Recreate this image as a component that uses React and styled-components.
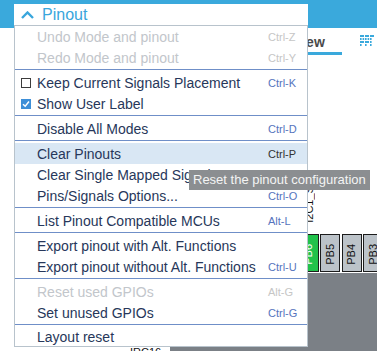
import React from 'react';
import styled, { createGlobalStyle } from 'styled-components';

const GlobalStyle = createGlobalStyle`
  html, body {
    margin: 0;
    padding: 0;
    background: #fff;
  }
  body {
    font-family: "Liberation Sans", Arial, sans-serif;
  }
`;

const Page = styled.div`
  position: relative;
  width: 377px;
  height: 351px;
  overflow: hidden;
  background: #fff;
  display: flex;
  flex-direction: column;
  font-family: "Liberation Sans", Arial, sans-serif;
`;

const TopBar = styled.div`
  height: 28px;
  flex-shrink: 0;
  background: #3aa9dc;
`;

const TabRow = styled.div`
  height: 27px;
  flex-shrink: 0;
  display: flex;
  align-items: flex-end;
  padding-left: 232px;
`;

const Tab = styled.div`
  padding: 0 17px 2px 15px;
  font-size: 14px;
  line-height: 16px;
  font-weight: bold;
  color: #4a4a4a;
  border-bottom: 3px solid #3aa9dc;
  white-space: nowrap;
`;

const ViewIcon = styled.svg`
  align-self: flex-start;
  margin-top: 7px;
  margin-left: 18px;
  flex-shrink: 0;
`;

const Canvas = styled.div`
  position: relative;
  flex: 1;
`;

const ChipBody = styled.div`
  position: absolute;
  left: 170px;
  top: 218px;
  right: -20px;
  bottom: -20px;
  background: #7b8086;
`;

const PinRow = styled.div`
  position: absolute;
  left: 277px;
  top: 179px;
  display: flex;
  gap: 1.5px;
`;

const Pin = styled.div`
  box-sizing: border-box;
  width: 20px;
  height: 38px;
  border: 1px solid #1c1c1c;
  background: ${p => (p.$active ? '#21c24b' : '#bcc3c9')};
  color: ${p => (p.$active ? '#fff' : '#111')};
  display: flex;
  flex-direction: column;
  justify-content: flex-end;
  align-items: center;
  padding-bottom: 6px;
  font-size: 11px;
`;

const Vertical = styled.span`
  writing-mode: vertical-rl;
  transform: rotate(180deg);
  line-height: 1;
  white-space: nowrap;
`;

const SignalLabel = styled(Vertical)`
  position: absolute;
  left: 304px;
  top: 117px;
  font-size: 11px;
  color: #111;
`;

const PinName = styled.span`
  position: absolute;
  left: 130px;
  top: 291px;
  font-size: 11px;
  color: #111;
  white-space: nowrap;
`;

const Menu = styled.div`
  position: absolute;
  left: 14px;
  top: 4px;
  width: 294px;
`;

const MenuHeader = styled.div`
  height: 21px;
  background: #fff;
  display: flex;
  align-items: center;
  gap: 8px;
  padding-left: 7px;
  font-size: 16px;
  color: #39a6dc;
`;

const Dropdown = styled.div`
  border: 1px solid #b8c3cc;
  background: #fff;
`;

const Row = styled.div`
  display: grid;
  grid-template-columns: 16px 1fr 39px;
  align-items: center;
  height: ${p => (p.$last ? '19px' : '21px')};
  padding-left: 6px;
  box-sizing: border-box;
  background: ${p => (p.$hover ? '#d9e7f4' : 'transparent')};
`;

const Label = styled.span`
  font-size: 14px;
  white-space: nowrap;
  color: ${p => (p.$disabled ? '#c2c6cb' : '#27375a')};
`;

const Shortcut = styled.span`
  font-size: 11px;
  white-space: nowrap;
  color: ${p => (p.$disabled ? '#c6c6c6' : p.$hover ? '#333' : '#5674bd')};
`;

const Check = styled.span`
  box-sizing: border-box;
  width: 10px;
  height: 10px;
  display: flex;
  align-items: center;
  justify-content: center;
  border: 1px solid ${p => (p.$checked ? '#3d8fd8' : '#3c3c3c')};
  background: ${p => (p.$checked ? '#3d8fd8' : '#fff')};
`;

const Separator = styled.div`
  height: 1px;
  margin: 1px 0 2px;
  background: #6f8fc8;
`;

const Tooltip = styled.div`
  position: absolute;
  left: 189px;
  top: 170px;
  height: 20px;
  padding: 0 4px;
  background: #8b8e91;
  color: #f4f4f4;
  font-size: 13px;
  line-height: 20px;
  white-space: nowrap;
`;

const groups = [
  [
    { label: 'Undo Mode and pinout', key: 'Ctrl-Z', disabled: true },
    { label: 'Redo Mode and pinout', key: 'Ctrl-Y', disabled: true },
  ],
  [
    { label: 'Keep Current Signals Placement', key: 'Ctrl-K', check: false },
    { label: 'Show User Label', check: true },
  ],
  [{ label: 'Disable All Modes', key: 'Ctrl-D' }],
  [
    { label: 'Clear Pinouts', key: 'Ctrl-P', hover: true },
    { label: 'Clear Single Mapped Signals', key: 'Ctrl-M' },
    { label: 'Pins/Signals Options...', key: 'Ctrl-O' },
  ],
  [{ label: 'List Pinout Compatible MCUs', key: 'Alt-L' }],
  [
    { label: 'Export pinout with Alt. Functions' },
    { label: 'Export pinout without Alt. Functions', key: 'Ctrl-U' },
  ],
  [
    { label: 'Reset used GPIOs', key: 'Alt-G', disabled: true },
    { label: 'Set unused GPIOs', key: 'Ctrl-G' },
  ],
  [{ label: 'Layout reset', last: true }],
];

const pins = [
  { name: 'PB7' },
  { name: 'PB6', active: true },
  { name: 'PB5' },
  { name: 'PB4' },
  { name: 'PB3' },
];

function MenuRow({ item }) {
  return (
    <Row $hover={item.hover} $last={item.last}>
      <span>
        {item.check !== undefined && (
          <Check $checked={item.check}>
            {item.check && (
              <svg width="8" height="8" viewBox="0 0 8 8">
                <polyline points="1,4.2 3.2,6.2 7,1.6" fill="none" stroke="#fff" strokeWidth="1.5" />
              </svg>
            )}
          </Check>
        )}
      </span>
      <Label $disabled={item.disabled}>{item.label}</Label>
      <Shortcut $disabled={item.disabled} $hover={item.hover}>{item.key}</Shortcut>
    </Row>
  );
}

export default function App() {
  return (
    <Page>
      <GlobalStyle />
      <TopBar />
      <TabRow>
        <Tab>Pinout view</Tab>
        <ViewIcon width="15" height="12" viewBox="0 0 15 12">
          <g fill="#3aa9dc">
            <rect x="0" y="0" width="4" height="2" />
            <rect x="5" y="0" width="4" height="2" />
            <rect x="10" y="0" width="4" height="2" />
            <rect x="0" y="3" width="1.6" height="2" />
            <rect x="2.6" y="3" width="1.6" height="2" />
            <rect x="5" y="3" width="1.6" height="2" />
            <rect x="7.6" y="3" width="1.6" height="2" />
            <rect x="10" y="3" width="1.6" height="2" />
            <rect x="0" y="6" width="4" height="2" />
            <rect x="5" y="6" width="4" height="2" />
            <rect x="10" y="6" width="1.6" height="2" />
            <rect x="0" y="9" width="1.6" height="2" />
            <rect x="5" y="9" width="1.6" height="2" />
            <rect x="10" y="9" width="1.6" height="2" />
          </g>
        </ViewIcon>
      </TabRow>
      <Canvas>
        <ChipBody />
        <SignalLabel>I2C1_SCL</SignalLabel>
        <PinRow>
          {pins.map(p => (
            <Pin key={p.name} $active={p.active}>
              <Vertical>{p.name}</Vertical>
            </Pin>
          ))}
        </PinRow>
        <PinName>IRC16</PinName>
      </Canvas>

      <Menu>
        <MenuHeader>
          <svg width="13" height="8" viewBox="0 0 13 8">
            <polyline points="1,7 6.5,1.5 12,7" fill="none" stroke="#39a6dc" strokeWidth="2.4" />
          </svg>
          Pinout
        </MenuHeader>
        <Dropdown>
          {groups.map((group, gi) => (
            <React.Fragment key={gi}>
              {gi > 0 && <Separator />}
              {group.map(item => (
                <MenuRow key={item.label} item={item} />
              ))}
            </React.Fragment>
          ))}
        </Dropdown>
      </Menu>
      <Tooltip>Reset the pinout configuration</Tooltip>
    </Page>
  );
}
